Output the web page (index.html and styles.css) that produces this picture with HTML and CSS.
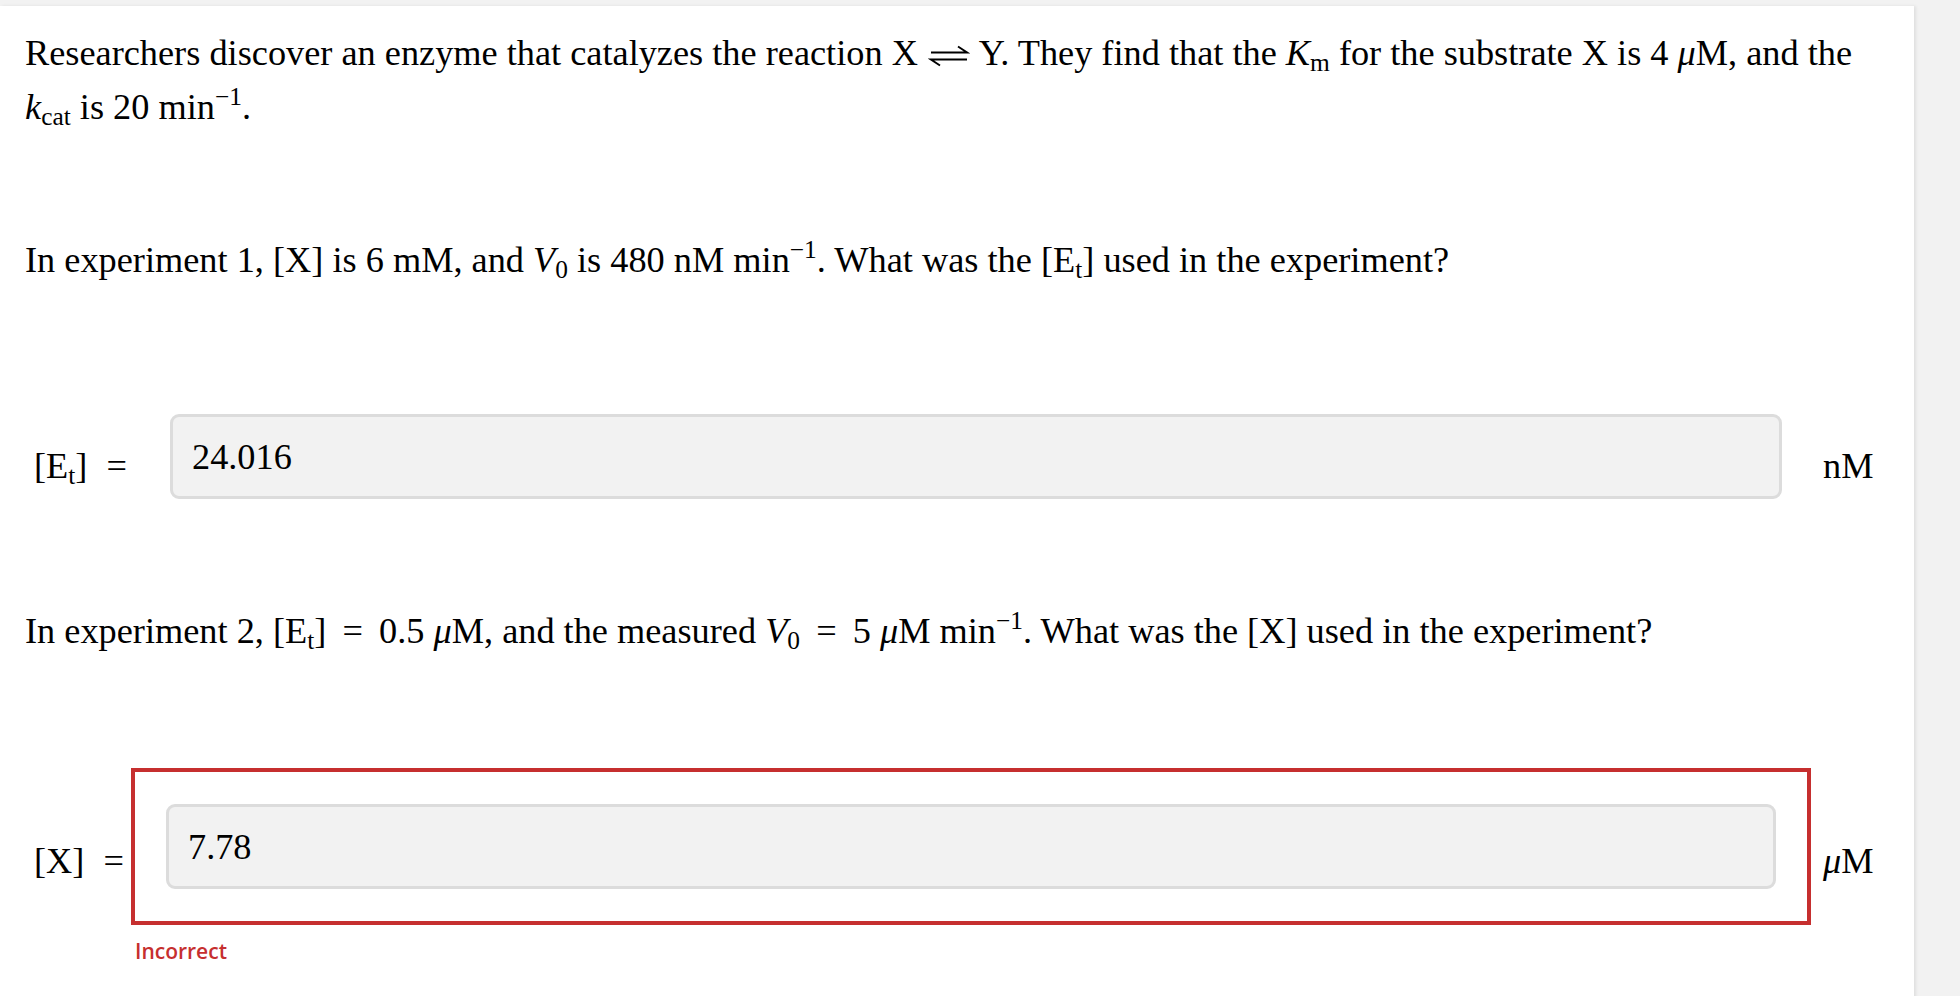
FILE: index.html
```html
<!DOCTYPE html>
<html>
<head>
<meta charset="utf-8">
<link rel="stylesheet" href="styles.css">
</head>
<body>
<div class="panel">
  <p class="text intro">Researchers discover an enzyme that catalyzes the reaction X <svg class="eq" width="42" height="22" viewBox="0 0 42 22"><path d="M3 7.5H39L30 1.5M39 14.5H3L12 20.5" fill="none" stroke="#000" stroke-width="1.9"/></svg> Y. They find that the <i>K</i><sub>m</sub> for the substrate X is 4 <i>μ</i>M, and the <i>k</i><sub>cat</sub> is 20 min<sup>−1</sup>.</p>
  <p class="text exp1">In experiment 1, [X] is 6 mM, and <i>V</i><sub>0</sub> is 480 nM min<sup>−1</sup>. What was the [E<sub>t</sub>] used in the experiment?</p>
  <div class="row row1">
    <span class="label">[E<sub>t</sub>]&nbsp;<span class="op">=</span></span>
    <div class="field">
      <div class="input">24.016</div>
    </div>
    <span class="unit">nM</span>
  </div>
  <p class="text exp2">In experiment 2, [E<sub>t</sub>] <span class="op">=</span> 0.5 <i>μ</i>M, and the measured <i>V</i><sub>0</sub> <span class="op">=</span> 5 <i>μ</i>M min<sup>−1</sup>. What was the [X] used in the experiment?</p>
  <div class="row row2">
    <span class="label">[X]&nbsp;<span class="op">=</span></span>
    <div class="field incorrect">
      <div class="input">7.78</div>
    </div>
    <span class="unit"><i>μ</i>M</span>
  </div>
  <div class="feedback">Incorrect</div>
</div>
</body>
</html>
```
FILE: styles.css
```css
html, body {
  margin: 0;
  padding: 0;
}
body {
  background: #f2f2f2;
  font-family: "Liberation Serif", "Times New Roman", serif;
  color: #000;
  overflow: hidden;
}
.panel {
  margin-top: 6px;
  width: 1914px;
  min-height: 1000px;
  background: #fff;
  box-shadow: 2px 0 3px rgba(0,0,0,0.08);
  padding: 20px 0 0 25px;
  box-sizing: border-box;
}
.text {
  margin: 0;
  max-width: 1850px;
  font-size: 36.3px;
  line-height: 54px;
}
sub, sup {
  line-height: 0;
  font-size: 70%;
}
sub {
  vertical-align: -0.25em;
}
sup {
  vertical-align: 0.55em;
}
.eq {
  vertical-align: -2px;
  margin: 0 1px;
}
.op {
  margin: 0 7px;
}
.exp1 {
  margin-top: 99px;
}
.row {
  display: flex;
  align-items: center;
  font-size: 36.3px;
  margin-left: -25px;
}
.row1 {
  margin-top: 91px;
}
.label {
  width: 97px;
  padding-left: 34px;
  padding-top: 18px;
  white-space: nowrap;
}
.label .op {
  margin: 0 0 0 10px;
}
.field {
  width: 1680px;
  box-sizing: border-box;
  border: 4px solid transparent;
  padding: 32px 25px 32px 35px;
}
.field.incorrect {
  border-color: #c62f2f;
  padding: 32px 31px;
}
.input {
  height: 85px;
  box-sizing: border-box;
  border: 3px solid #dcdcdc;
  border-radius: 9px;
  background: #f2f2f2;
  padding: 0 19px;
  display: flex;
  align-items: center;
  line-height: 40px;
}
.unit {
  margin-left: 12px;
  padding-top: 18px;
}
.row2 .label,
.row2 .unit {
  padding-top: 28px;
}
.exp2 {
  margin-top: 69px;
}
.row2 {
  margin-top: 110px;
}
.feedback {
  margin: 14px 0 0 110px;
  font-family: "Open Sans", sans-serif;
  font-weight: 600;
  font-size: 21px;
  line-height: 24px;
  color: #c62f2f;
}
```
